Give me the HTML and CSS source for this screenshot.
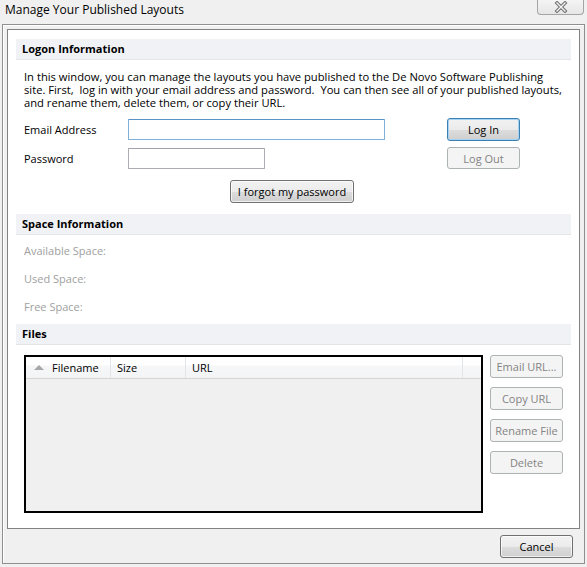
FILE: index.html
```html
<!DOCTYPE html>
<html>
<head>
<meta charset="utf-8">
<link rel="stylesheet" href="styles.css">
</head>
<body>
<div class="window">
  <div class="titlebar">
    <span class="title">Manage Your Published Layouts</span>
    <div class="close">
      <svg width="16" height="12" viewBox="0 0 16 12">
        <path d="M4 2 L12 10 M12 2 L4 10" stroke="#6d6d6d" stroke-width="3.4" stroke-linecap="square" fill="none"/>
        <path d="M4 2 L12 10 M12 2 L4 10" stroke="#f4f4f4" stroke-width="1.4" stroke-linecap="square" fill="none"/>
      </svg>
    </div>
  </div>
  <div class="frame">
    <div class="panel">
      <div class="section-head">Logon Information</div>
      <p class="intro">In this window, you can manage the layouts you have published to the De Novo Software Publishing<br>site. First,&nbsp; log in with your email address and password.&nbsp; You can then see all of your published layouts,<br>and rename them, delete them, or copy their URL.</p>
      <div class="logon-grid">
        <label class="lbl">Email Address</label>
        <div class="field"><input class="input input-email" type="text"></div>
        <button class="btn btn-default">Log In</button>
        <label class="lbl">Password</label>
        <div class="field"><input class="input input-pass" type="password"></div>
        <button class="btn" disabled>Log Out</button>
      </div>
      <div class="forgot-row"><button class="btn btn-forgot">I forgot my password</button></div>

      <div class="section-head">Space Information</div>
      <div class="space-list">
        <div class="space-row">Available Space:</div>
        <div class="space-row">Used Space:</div>
        <div class="space-row">Free Space:</div>
      </div>

      <div class="section-head files-head">Files</div>
      <div class="files">
        <div class="listbox">
          <div class="list-header">
            <div class="col col-name"><span class="sort-arrow"></span>Filename</div>
            <div class="col col-size">Size</div>
            <div class="col col-url">URL</div>
            <div class="col col-extra"></div>
          </div>
          <div class="list-body"></div>
        </div>
        <div class="file-buttons">
          <button class="btn" disabled>Email URL...</button>
          <button class="btn" disabled>Copy URL</button>
          <button class="btn" disabled>Rename File</button>
          <button class="btn" disabled>Delete</button>
        </div>
      </div>
    </div>
    <div class="footer">
      <button class="btn btn-cancel">Cancel</button>
    </div>
  </div>
</div>
</body>
</html>
```

FILE: styles.css
```css
* { box-sizing: border-box; }
html, body {
  margin: 0;
  padding: 0;
  width: 587px;
  height: 567px;
  overflow: hidden;
  background: #f0f0f0;
  font-family: "Open Sans", "Noto Sans", sans-serif;
  font-size: 11px;
  color: #000;
}
.window {
  width: 587px;
  height: 567px;
  display: flex;
  flex-direction: column;
}
.titlebar {
  height: 24px;
  display: flex;
  justify-content: space-between;
  align-items: flex-start;
  padding-left: 5px;
}
.title {
  font-size: 12px;
  line-height: 20px;
  color: #000;
}
.close {
  width: 47px;
  height: 15px;
  margin-right: 3px;
  border: 1px solid #a4a4a4;
  border-top: none;
  border-radius: 0 0 4px 4px;
  background: linear-gradient(#f4f4f4, #e6e6e6);
  display: flex;
  justify-content: center;
  align-items: center;
}
.frame {
  margin: 0 2px 3px 2px;
  flex: 1;
  border: 1px solid #8f8f8f;
  box-shadow: inset 1px 1px 0 #fff;
  padding: 4px 4px 0 4px;
  display: flex;
  flex-direction: column;
}
.panel {
  height: 500px;
  background: #fff;
  border: 1px solid #828282;
  padding: 9px 8px 0 8px;
}
.section-head {
  height: 21px;
  background: #f1f2f6;
  border-bottom: 1px solid #e4e5e9;
  font-weight: bold;
  padding-left: 6px;
  line-height: 20px;
  font-size: 11px;
}
.intro {
  margin: 10px 0 0 8px;
  line-height: 13px;
  font-size: 11.2px;
  white-space: nowrap;
}
.logon-grid {
  margin: 9px 0 0 8px;
  display: grid;
  grid-template-columns: 104px 319px 73px;
  grid-template-rows: 23px 22px;
  row-gap: 6px;
  align-items: center;
}
.lbl { line-height: 13px; }
.field { display: flex; align-items: center; }
.input {
  height: 21px;
  border: 1px solid #abadb3;
  border-top-color: #a1a3aa;
  background: #fff;
  padding: 0;
  margin: 0;
  font: inherit;
  border-radius: 1px;
}
.input-email {
  width: 257px;
  border-color: #7fb0d9;
  border-top-color: #5993c7;
}
.input-pass { width: 137px; }
.btn {
  font-family: "Open Sans", "Noto Sans", sans-serif;
  font-size: 11px;
  color: #000;
  height: 23px;
  padding: 0;
  margin: 0;
  border: 1px solid #707070;
  border-radius: 3px;
  background: linear-gradient(#f2f2f2 0%, #ebebeb 50%, #dddddd 51%, #cfcfcf 100%);
  box-shadow: inset 0 0 0 1px rgba(255,255,255,0.7);
  line-height: 19px;
}
.btn:disabled {
  color: #838383;
  border-color: #adb2b5;
  background: #f4f4f4;
  box-shadow: none;
}
.btn-default {
  border-color: #3c7fb1;
  box-shadow: inset 0 0 0 1px #a6d3f3;
  height: 23px;
}
.logon-grid .btn { width: 73px; }
.logon-grid .btn:disabled { height: 22px; }
.forgot-row {
  margin-top: 11px;
  display: flex;
  padding-left: 214px;
}
.btn-forgot { width: 124px; }
.forgot-row + .section-head { margin-top: 11px; }
.space-list {
  margin-top: 2px;
  padding-left: 8px;
}
.space-row {
  height: 28px;
  line-height: 28px;
  color: #a0a0a0;
}
.files-head { margin-top: 3px; }
.files {
  margin: 10px 0 0 8px;
  display: flex;
  gap: 7px;
  align-items: flex-start;
}
.listbox {
  width: 459px;
  height: 158px;
  border: 2px solid #000;
  background: #f0f0f0;
  display: flex;
  flex-direction: column;
}
.list-header {
  height: 22px;
  display: flex;
  background: linear-gradient(#ffffff 0%, #ffffff 40%, #f6f7f8 41%, #f3f4f6 100%);
  border-bottom: 1px solid #d5d5d5;
}
.col {
  border-right: 1px solid #e3e4e6;
  line-height: 21px;
  padding-left: 6px;
  white-space: nowrap;
}
.col-name { width: 85px; padding-left: 8px; display: flex; align-items: center; }
.col-size { width: 75px; }
.col-url { width: 277px; }
.col-extra { flex: 1; border-right: none; }
.sort-arrow {
  width: 0;
  height: 0;
  border-left: 5px solid transparent;
  border-right: 5px solid transparent;
  border-bottom: 5px solid #a7a7a7;
  margin-right: 8px;
  margin-top: -1px;
}
.list-body { flex: 1; }
.file-buttons {
  display: flex;
  flex-direction: column;
  gap: 9px;
}
.file-buttons .btn { width: 73px; }
.footer {
  display: flex;
  justify-content: flex-end;
  padding: 6px 7px 0 0;
}
.btn-cancel { width: 73px; }
```
